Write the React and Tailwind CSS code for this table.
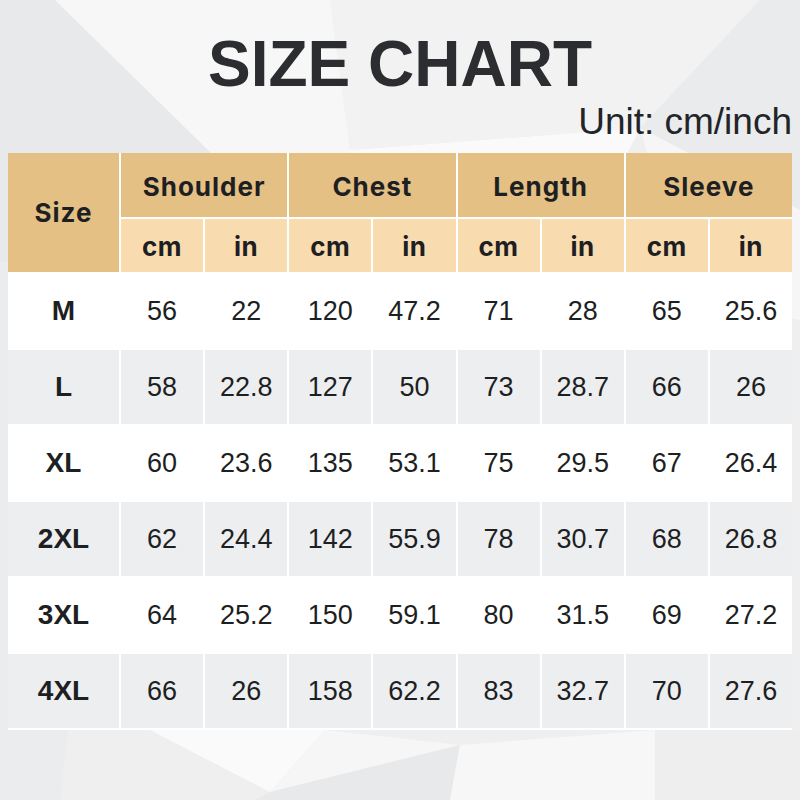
const groups = ["Shoulder", "Chest", "Length", "Sleeve"];

const rows = [
  ["M", "56", "22", "120", "47.2", "71", "28", "65", "25.6"],
  ["L", "58", "22.8", "127", "50", "73", "28.7", "66", "26"],
  ["XL", "60", "23.6", "135", "53.1", "75", "29.5", "67", "26.4"],
  ["2XL", "62", "24.4", "142", "55.9", "78", "30.7", "68", "26.8"],
  ["3XL", "64", "25.2", "150", "59.1", "80", "31.5", "69", "27.2"],
  ["4XL", "66", "26", "158", "62.2", "83", "32.7", "70", "27.6"],
];

function Backdrop() {
  return (
    <svg className="absolute inset-0" width="800" height="800" viewBox="0 0 800 800">
      <rect width="800" height="800" fill="#efeff0" />
      <polygon points="0,0 55,0 300,240 120,300 0,260" fill="#e8e9ea" />
      <polygon points="55,0 330,0 350,150 300,240" fill="#f7f7f8" />
      <polygon points="300,240 350,150 640,128 560,290" fill="#fafafa" />
      <polygon points="330,0 760,0 640,128 350,150" fill="#f2f2f3" />
      <polygon points="760,0 800,0 800,210 640,128" fill="#eaebec" />
      <polygon points="640,128 800,210 800,320 690,300" fill="#f6f6f7" />
      <polygon points="0,260 120,300 60,800 0,800" fill="#ebeced" />
      <polygon points="150,730 325,730 270,792" fill="#fafafa" />
      <polygon points="325,730 460,745 270,792" fill="#f6f6f6" />
      <polygon points="270,792 460,745 450,800 255,800" fill="#e8e9ea" />
      <polygon points="460,745 655,730 655,800 450,800" fill="#f7f7f7" />
      <polygon points="655,730 800,730 800,800 655,800" fill="#eeeeef" />
    </svg>
  );
}

export default function App() {
  return (
    <div className="relative h-[800px] w-[800px] overflow-hidden">
      <Backdrop />
      <div className="relative flex flex-col px-2 pt-8 font-['Liberation_Sans',Arial,sans-serif] text-[#1d1f23]">
        <h1 className="text-center text-[64px] font-bold leading-none text-[#2b2d30]">SIZE CHART</h1>
        <div className="mt-[7px] text-right text-[37px] leading-none text-[#222428]">Unit: cm/inch</div>

        <div className="mt-[13px] grid grid-cols-[111px_repeat(8,minmax(0,1fr))] grid-rows-[64px_53px_repeat(6,74px)] gap-[2px] bg-white pb-[2px]">
          <div className="row-span-2 flex items-center justify-center bg-[#e5c084] font-['Inter',sans-serif] text-[26px] font-bold tracking-[1px]">
            Size
          </div>
          {groups.map((g) => (
            <div
              key={g}
              className="col-span-2 flex items-center justify-center bg-[#e5c084] pt-[3px] font-['Inter',sans-serif] text-[26px] font-bold tracking-[1px]"
            >
              {g}
            </div>
          ))}
          {groups.map((g) =>
            ["cm", "in"].map((u) => (
              <div
                key={g + u}
                className="flex items-center justify-center bg-[#f9dbb0] pt-[2px] font-['Inter',sans-serif] text-[26px] font-bold tracking-[0.5px]"
              >
                {u}
              </div>
            ))
          )}

          {rows.map((row, i) =>
            row.map((cell, j) => (
              <div
                key={i + "-" + j}
                className={[
                  "flex items-center justify-center",
                  i % 2 === 0 ? "bg-white" : "bg-[#edeef0]",
                  j === 0 ? "text-[28px] font-bold" : "text-[27px]",
                ].join(" ")}
              >
                {cell}
              </div>
            ))
          )}
        </div>
      </div>
    </div>
  );
}
